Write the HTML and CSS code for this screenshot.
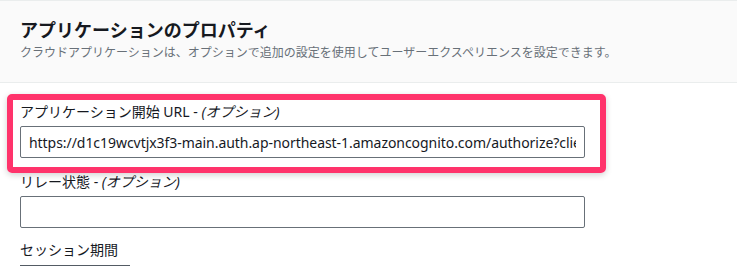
FILE: index.html
```html
<!DOCTYPE html>
<html lang="ja">
<head>
    <meta charset="UTF-8">
    <meta name="viewport" content="width=device-width, initial-scale=1.0">
    <title>アプリケーションのプロパティ</title>
    <link rel="stylesheet" href="styles.css">
</head>
<body>
    <div class="panel">
        <div class="panel-header">
            <h2>アプリケーションのプロパティ</h2>
            <p class="description">クラウドアプリケーションは、オプションで追加の設定を使用してユーザーエクスペリエンスを設定できます。</p>
        </div>

        <div class="panel-body">
            <div class="field highlighted">
                <label for="startUrl">アプリケーション開始 URL - <i>(オプション)</i></label>
                <input type="text" id="startUrl" value="https://d1c19wcvtjx3f3-main.auth.ap-northeast-1.amazoncognito.com/authorize?client_id=">
                <span class="highlight-box"></span>
            </div>

            <div class="field">
                <label for="relayState">リレー状態 - <i>(オプション)</i></label>
                <input type="text" id="relayState">
            </div>

            <div class="field session">
                <label>セッション期間</label>
                <div class="session-select"></div>
            </div>
        </div>
    </div>
</body>
</html>
```

FILE: styles.css
```css
body {
    margin: 0;
    padding: 0;
    background: #fff;
    color: #16191f;
    font-family: "Noto Sans", "Noto Sans CJK JP", sans-serif;
    overflow: hidden;
}

.panel-header {
    background: #fafafa;
    border-top: 1px solid #eaeded;
    border-bottom: 1px solid #eaeded;
    padding: 18px 20px 21px;
}

h2 {
    margin: 0;
    font-size: 18px;
    line-height: 22px;
    font-weight: bold;
}

.description {
    margin: 4px 0 0;
    font-size: 12px;
    line-height: 16px;
    color: #687078;
}

.panel-body {
    padding: 19px 20px 0;
    width: 565px;
}

.field {
    display: flex;
    flex-direction: column;
    margin-bottom: 14px;
}

.field.session {
    margin-top: -2px;
    margin-bottom: 0;
}

.field label {
    font-size: 14px;
    line-height: 20px;
    margin-bottom: 4px;
}

.field label i {
    font-style: italic;
}

.field input {
    box-sizing: border-box;
    height: 32px;
    padding: 0 8px;
    border: 1px solid #687078;
    border-radius: 2px;
    font-family: "Noto Sans", "Noto Sans CJK JP", sans-serif;
    font-size: 14px;
    letter-spacing: -0.05px;
    color: #16191f;
    background: #fff;
}

.highlighted {
    position: relative;
}

/* annotation frame drawn over the first field */
.highlight-box {
    position: absolute;
    top: -8px;
    left: -13px;
    right: -21px;
    bottom: -15px;
    border: 6px solid #ff336b;
    border-radius: 5px;
    box-shadow: 0 2px 6px rgba(0, 0, 0, 0.18);
    pointer-events: none;
}

.session-select {
    width: 110px;
    height: 1px;
    margin-top: 1px;
    border-top: 1px solid #545b64;
}
```
